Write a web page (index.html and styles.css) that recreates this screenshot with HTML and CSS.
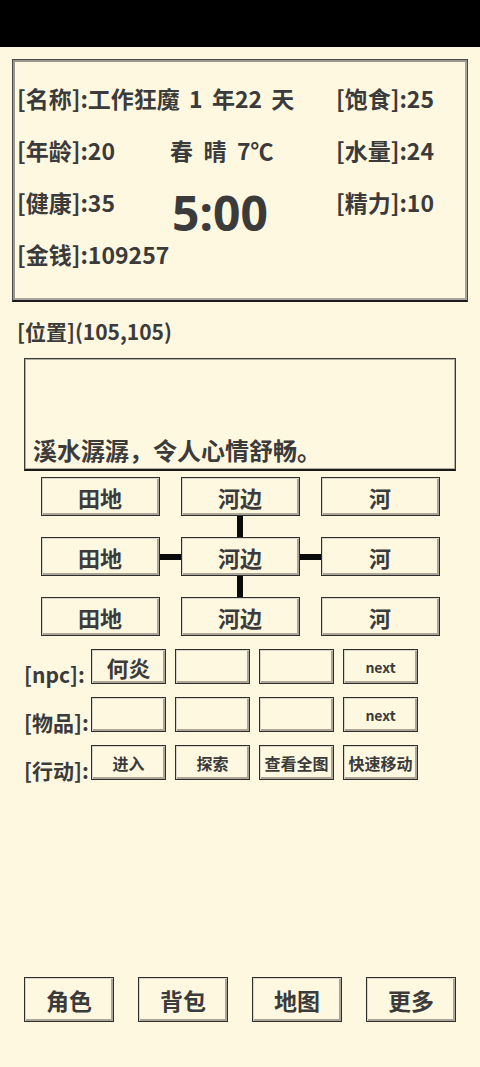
FILE: index.html
```html
<!DOCTYPE html>
<html lang="zh-CN">
<head>
<meta charset="utf-8">
<title>Game</title>
<link rel="stylesheet" href="styles.css">
</head>
<body>
<div class="screen">
  <div class="statusbar"></div>

  <section class="panel">
    <div class="stat c1 r1 wide">[名称]:工作狂魔&nbsp;1&nbsp;年22&nbsp;天</div>
    <div class="stat c3 r1">[饱食]:25</div>
    <div class="stat c1 r2">[年龄]:20</div>
    <div class="stat c2 r2">春&nbsp;&nbsp;晴&nbsp;&nbsp;7℃</div>
    <div class="stat c3 r2">[水量]:24</div>
    <div class="stat c1 r3">[健康]:35</div>
    <div class="clock">5:00</div>
    <div class="stat c3 r3">[精力]:10</div>
    <div class="stat c1 r4">[金钱]:109257</div>
  </section>

  <div class="position">[位置](105,105)</div>

  <div class="desc"><span>溪水潺潺，令人心情舒畅。</span></div>

  <div class="map">
    <div class="btn cell">田地</div><div></div><div class="btn cell">河边</div><div></div><div class="btn cell">河</div>
    <div></div><div></div><div class="vlink"></div><div></div><div></div>
    <div class="btn cell">田地</div><div class="hlink"></div><div class="btn cell">河边</div><div class="hlink"></div><div class="btn cell">河</div>
    <div></div><div></div><div class="vlink"></div><div></div><div></div>
    <div class="btn cell">田地</div><div></div><div class="btn cell">河边</div><div></div><div class="btn cell">河</div>
  </div>

  <div class="rows">
    <div class="row">
      <div class="label">[npc]:</div>
      <div class="btn small big">何炎</div>
      <div class="btn small"></div>
      <div class="btn small"></div>
      <div class="btn small next">next</div>
    </div>
    <div class="row">
      <div class="label">[物品]:</div>
      <div class="btn small"></div>
      <div class="btn small"></div>
      <div class="btn small"></div>
      <div class="btn small next">next</div>
    </div>
    <div class="row">
      <div class="label">[行动]:</div>
      <div class="btn small act">进入</div>
      <div class="btn small act">探索</div>
      <div class="btn small act">查看全图</div>
      <div class="btn small act">快速移动</div>
    </div>
  </div>

  <nav class="nav">
    <div class="btn navbtn">角色</div>
    <div class="btn navbtn">背包</div>
    <div class="btn navbtn">地图</div>
    <div class="btn navbtn">更多</div>
  </nav>
</div>
</body>
</html>
```

FILE: styles.css
```css
* { box-sizing: border-box; }
html, body { margin: 0; padding: 0; }
body {
  background: #fff8e1;
  color: #3b3b3b;
  font-family: "Noto Sans CJK SC", "Noto Sans", sans-serif;
  font-weight: 700;
}
.screen {
  width: 480px;
  height: 1067px;
  display: flex;
  flex-direction: column;
  overflow: hidden;
}
.statusbar {
  height: 47px;
  background: #000;
  flex: none;
}

/* top panel */
.panel {
  margin: 12px 12px 0 12px;
  height: 243px;
  border: 1px solid #4a4a4a;
  border-bottom: 2px solid #1a1a1a;
  box-shadow: inset 2px 2px 0 #9a978e, inset -2px -2px 0 #a9a59a;
  padding: 12px 0 0 4px;
  display: grid;
  grid-template-columns: 153px 166px 1fr;
  grid-template-rows: repeat(4, 52px);
  font-size: 23px;
}
.stat {
  display: flex;
  align-items: center;
  white-space: nowrap;
}
.wide { word-spacing: 4px; }
.c1 { grid-column: 1; }
.c2 { grid-column: 2; }
.c3 { grid-column: 3; }
.wide { grid-column: 1 / 3; }
.r1 { grid-row: 1; }
.r2 { grid-row: 2; }
.r3 { grid-row: 3; }
.r4 { grid-row: 4; }
.clock {
  grid-column: 2;
  grid-row: 3 / 5;
  font-family: "Noto Sans", "Open Sans", sans-serif;
  font-size: 48px;
  line-height: 1;
  padding-top: 13px;
  padding-left: 2px;
}

.position {
  margin: 15px 0 0 17px;
  font-size: 21px;
  line-height: 28px;
  height: 28px;
}

.desc {
  margin: 13px 24px 0 24px;
  height: 113px;
  border: 1px solid #3a3a3a;
  border-bottom: 2px solid #1a1a1a;
  box-shadow: inset 1px 1px 0 #b2aea2, inset -1px -1px 0 #b2aea2;
  display: flex;
  align-items: flex-end;
  padding: 0 8px 4px 8px;
  font-size: 24px;
  line-height: 30px;
}

/* buttons */
.btn {
  border: 1px solid #2e2e2e;
  box-shadow: inset 1px 1px 0 #d9d5c8, inset -2px -2px 0 #aaa597;
  background: #fff8e1;
  display: flex;
  align-items: center;
  justify-content: center;
  white-space: nowrap;
}

.map {
  margin: 6px auto 0 auto;
  display: grid;
  grid-template-columns: 119px 21px 119px 21px 119px;
  grid-template-rows: 39px 21px 39px 21px 39px;
}
.cell { font-size: 22px; }
.vlink {
  width: 6px;
  justify-self: center;
  background: #0a0a0a;
}
.hlink {
  height: 6px;
  align-self: center;
  background: #0a0a0a;
}

.rows {
  margin: 13px 0 0 24px;
  display: flex;
  flex-direction: column;
  gap: 13px;
}
.row {
  display: flex;
  align-items: flex-end;
  height: 35px;
}
.label {
  width: 67px;
  font-size: 21px;
  line-height: 22px;
  margin-bottom: -1px;
  white-space: nowrap;
}
.small {
  width: 75px;
  height: 35px;
  margin-right: 9px;
}
.small.big { font-size: 22px; }
.next { font-size: 14px; }
.act { font-size: 16px; }

.nav {
  margin-top: auto;
  margin-bottom: 45px;
  padding: 0 24px;
  display: flex;
  justify-content: space-between;
}
.navbtn {
  width: 90px;
  height: 45px;
  font-size: 23px;
}
```
